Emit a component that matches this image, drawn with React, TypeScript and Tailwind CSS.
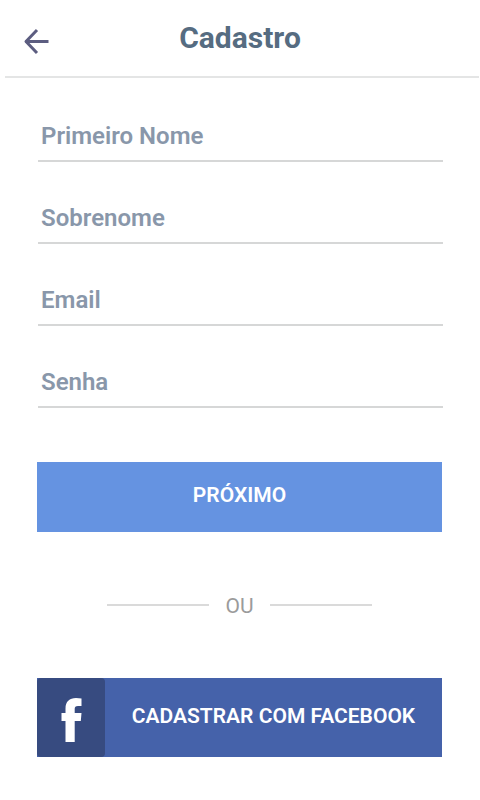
import { useState } from 'react'
import type { FormEvent } from 'react'

interface Field {
  id: 'firstName' | 'lastName' | 'email' | 'password'
  label: string
  type: string
}

const fields: Field[] = [
  { id: 'firstName', label: 'Primeiro Nome', type: 'text' },
  { id: 'lastName', label: 'Sobrenome', type: 'text' },
  { id: 'email', label: 'Email', type: 'email' },
  { id: 'password', label: 'Senha', type: 'password' }
]

function BackIcon() {
  return (
    <svg
      viewBox="0 0 28 28"
      className="h-7 w-7"
      fill="none"
      stroke="#5c5d80"
      strokeWidth="3"
      aria-hidden="true"
    >
      <path d="M27.500 13.500H4.500" />
      <path d="M16 2L5 13.500L16 25" strokeLinejoin="round" />
    </svg>
  )
}

function FacebookIcon() {
  return (
    <svg viewBox="0 0 22 46" className="h-[46px] w-[22px]" fill="#ffffff" aria-hidden="true">
      <path d="M5.500 45V24H1.500V16H5.500V11.500C5.500 4.500 9.500 1 16 1Q19 1 21.500 1.500V9H18C15.500 9 14.700 10 14.700 12V16H21.500L20.800 24H14.700V45Z" />
    </svg>
  )
}

export default function App() {
  const [values, setValues] = useState({
    firstName: '',
    lastName: '',
    email: '',
    password: ''
  })

  const handleChange = (id: Field['id'], value: string) => {
    setValues(prev => ({ ...prev, [id]: value }))
  }

  const handleSubmit = (e: FormEvent) => {
    e.preventDefault()
  }

  return (
    <div className="min-h-screen bg-white font-['Roboto',sans-serif]">
      {/* Header */}
      <header className="ml-[5px] mr-px grid h-[78px] grid-cols-[64px_1fr_68px] items-center border-b-2 border-[#e4e5e5]">
        <button type="button" aria-label="Voltar" className="mt-2 ml-4 w-7">
          <BackIcon />
        </button>
        <h1 className="text-center text-[30px] leading-10 font-bold text-[#566c81]">Cadastro</h1>
      </header>

      <main className="pr-[38px] pl-[37px]">
        <form onSubmit={handleSubmit}>
          <div className="-mr-px ml-px space-y-8 pt-[34px]">
            {/* The label sits inside the empty box and goes away once there is a value */}
            {fields.map(field => (
              <div key={field.id} className="grid items-center border-b-2 border-[#d6d7d7]">
                <input
                  id={field.id}
                  type={field.type}
                  value={values[field.id]}
                  onChange={e => handleChange(field.id, e.target.value)}
                  placeholder=" "
                  className="peer col-start-1 row-start-1 h-12 w-full px-[3px] text-[24px] font-semibold text-[#566c81] outline-none"
                />
                <label
                  htmlFor={field.id}
                  className="invisible col-start-1 row-start-1 cursor-text px-[3px] text-[24px] leading-8 font-semibold text-[#8997aa] peer-placeholder-shown:visible"
                >
                  {field.label}
                </label>
              </div>
            ))}
          </div>

          <button
            type="submit"
            className="mt-[54px] h-[70px] w-full bg-[#6593e1] pb-[2px] text-[21px] font-semibold text-white"
          >
            PRÓXIMO
          </button>
        </form>

        {/* Divider */}
        <div className="mt-[57px] flex h-8 items-center gap-4 px-[70px]">
          <span className="h-[2px] flex-1 bg-[#dadada]" />
          <span className="pt-1 text-[21px] text-[#9b9b9b]">OU</span>
          <span className="h-[2px] flex-1 bg-[#dadada]" />
        </div>

        <button
          type="button"
          className="mt-[57px] flex h-[79px] w-full items-stretch bg-[#4562aa] text-[21px] font-semibold text-white"
        >
          <span className="flex w-[68px] items-center justify-center rounded bg-[#374b80] pt-1">
            <FacebookIcon />
          </span>
          <span className="flex flex-1 items-center justify-center pb-[2px]">
            CADASTRAR COM FACEBOOK
          </span>
        </button>
      </main>
    </div>
  )
}
